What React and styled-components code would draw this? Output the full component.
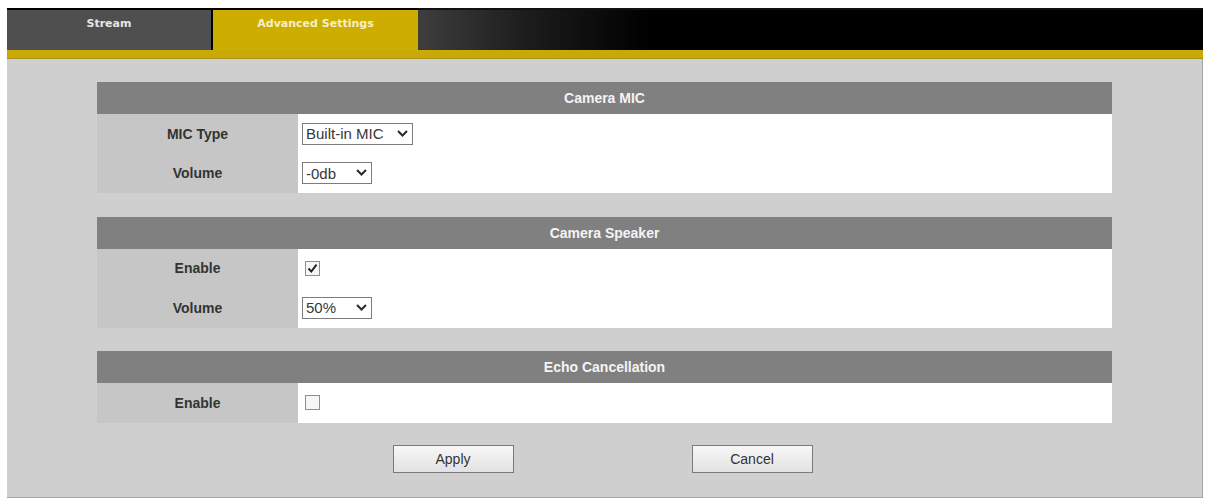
import React from 'react';
import styled, { createGlobalStyle } from 'styled-components';

const Global = createGlobalStyle`
  html, body {
    margin: 0;
    padding: 0;
    background: #ffffff;
    font-family: "Liberation Sans", Arial, sans-serif;
  }
`;

const Page = styled.div`
  padding: 8px 6px 0 7px;
`;

const TabBar = styled.div`
  display: flex;
  height: 42px;
  background: #000;
`;

const Tab = styled.div`
  width: ${(p) => p.w}px;
  margin-top: 2px;
  margin-right: ${(p) => (p.gap ? 2 : 0)}px;
  background: ${(p) => (p.active ? '#cdae00' : '#4f4f4f')};
  color: ${(p) => (p.active ? '#f6efc4' : '#e6e6e6')};
  font-family: "DejaVu Sans", Verdana, sans-serif;
  font-weight: bold;
  font-size: 11px;
  text-align: center;
  padding-top: 7px;
  box-sizing: border-box;
`;

const Fade = styled.div`
  flex: 1;
  background: linear-gradient(to right, #3e3e3e 0px, #1c1c1c 110px, #000 230px);
  border-top: 2px solid #111;
`;

const Stripe = styled.div`
  height: 8px;
  background: #c8a906;
  border-bottom: 1px solid #a99320;
`;

const Content = styled.div`
  background: #cfcfcf;
  border-right: 1px solid #a4a4a4;
  border-bottom: 1px solid #a4a4a4;
  padding: 23px 90px 24px 90px;
  display: flex;
  flex-direction: column;
  gap: 23.5px;
`;

const Panel = styled.div`
  display: flex;
  flex-direction: column;
`;

const Header = styled.div`
  height: 32px;
  background: #808080;
  color: #f4f4f4;
  font-weight: bold;
  font-size: 14px;
  display: flex;
  align-items: center;
  justify-content: center;
`;

const Body = styled.div`
  display: grid;
  grid-template-columns: 201px 1fr;
  grid-auto-rows: 39.5px;
`;

const Label = styled.div`
  background: #c6c6c6;
  color: #333;
  font-weight: bold;
  font-size: 14px;
  display: flex;
  align-items: center;
  justify-content: center;
`;

const Value = styled.div`
  background: #fff;
  display: flex;
  align-items: center;
  padding-left: 4px;
`;

const SelectWrap = styled.span`
  position: relative;
  display: inline-flex;
`;

const Select = styled.select`
  appearance: none;
  -webkit-appearance: none;
  width: ${(p) => p.w}px;
  height: 22px;
  border: 1px solid #7c7c7c;
  border-radius: 0;
  background: #fff;
  color: #383838;
  font-family: "Liberation Sans", Arial, sans-serif;
  font-size: 15px;
  padding: 0 0 0 3px;
  outline: none;
`;

const Chevron = styled.svg`
  position: absolute;
  right: 5px;
  top: 7px;
  pointer-events: none;
`;

const Box = styled.span`
  width: 13px;
  height: 13px;
  margin-left: 3px;
  border: 1px solid #8e8e8e;
  background: #f6f6f6;
  display: inline-flex;
  align-items: center;
  justify-content: center;
`;

const Buttons = styled.div`
  display: flex;
  justify-content: center;
  gap: 178px;
  margin-top: -1px;
  padding-right: 4px;
`;

const Button = styled.button`
  width: 121px;
  height: 28px;
  border: 1px solid #7a7a7a;
  background: linear-gradient(#f7f7f7, #e2e2e2);
  color: #333;
  font-family: "Liberation Sans", Arial, sans-serif;
  font-size: 14px;
  cursor: pointer;
`;

const Dropdown = ({ w, value, options }) => (
  <SelectWrap>
    <Select w={w} defaultValue={value}>
      {options.map((o) => (
        <option key={o}>{o}</option>
      ))}
    </Select>
    <Chevron width="11" height="7" viewBox="0 0 11 7">
      <path d="M1 1 L5.5 5.5 L10 1" fill="none" stroke="#2a2a2a" strokeWidth="2" />
    </Chevron>
  </SelectWrap>
);

const Check = ({ checked }) => (
  <Box>
    {checked && (
      <svg width="11" height="11" viewBox="0 0 11 11">
        <path d="M1.5 5.5 L4.3 8.6 L9.5 1.6" fill="none" stroke="#1e1e1e" strokeWidth="1.9" />
      </svg>
    )}
  </Box>
);

const App = () => (
  <Page>
    <Global />
    <TabBar>
      <Tab w={204} gap>Stream</Tab>
      <Tab w={205} active>Advanced Settings</Tab>
      <Fade />
    </TabBar>
    <Stripe />
    <Content>
      <Panel>
        <Header>Camera MIC</Header>
        <Body>
          <Label>MIC Type</Label>
          <Value>
            <Dropdown w={111} value="Built-in MIC" options={['Built-in MIC', 'External MIC']} />
          </Value>
          <Label>Volume</Label>
          <Value>
            <Dropdown w={70} value="-0db" options={['-0db', '-6db', '-12db']} />
          </Value>
        </Body>
      </Panel>
      <Panel>
        <Header>Camera Speaker</Header>
        <Body>
          <Label>Enable</Label>
          <Value>
            <Check checked />
          </Value>
          <Label>Volume</Label>
          <Value>
            <Dropdown w={70} value="50%" options={['25%', '50%', '75%', '100%']} />
          </Value>
        </Body>
      </Panel>
      <Panel>
        <Header>Echo Cancellation</Header>
        <Body>
          <Label>Enable</Label>
          <Value>
            <Check />
          </Value>
        </Body>
      </Panel>
      <Buttons>
        <Button>Apply</Button>
        <Button>Cancel</Button>
      </Buttons>
    </Content>
  </Page>
);

export default App;
